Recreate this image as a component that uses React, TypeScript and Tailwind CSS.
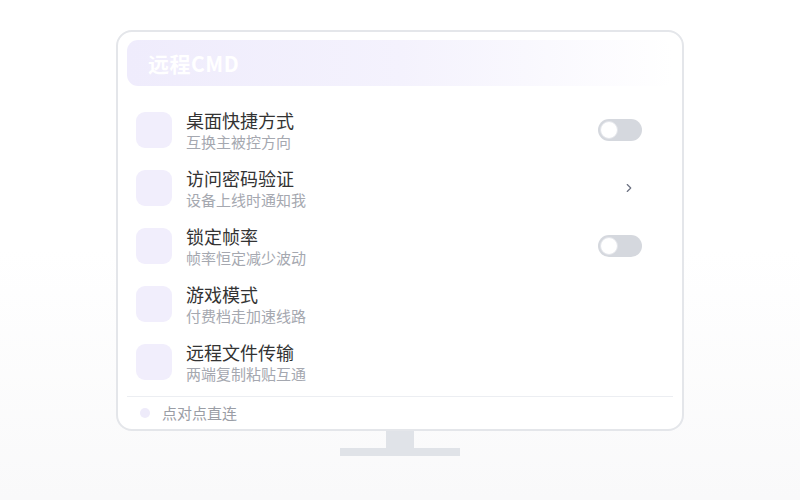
import { ChevronRight } from "lucide-react";

type Row = {
  title: string;
  desc: string;
  action: "toggle" | "chevron" | "none";
};

const rows: Row[] = [
  { title: "桌面快捷方式", desc: "互换主被控方向", action: "toggle" },
  { title: "访问密码验证", desc: "设备上线时通知我", action: "chevron" },
  { title: "锁定帧率", desc: "帧率恒定减少波动", action: "toggle" },
  { title: "游戏模式", desc: "付费档走加速线路", action: "none" },
  { title: "远程文件传输", desc: "两端复制粘贴互通", action: "none" },
];

function Toggle() {
  return (
    <div className="w-[44px] h-[22px] rounded-full bg-[#d5d8de] p-[2px] flex items-center">
      <div className="w-[18px] h-[18px] rounded-full bg-white border border-[#e3e5ea]" />
    </div>
  );
}

function SettingRow({ row }: { row: Row }) {
  return (
    <div className="h-[58px] shrink-0 flex items-center pl-[9px] pr-[31px]">
      <div className="w-[36px] h-[36px] rounded-[9px] bg-[#f1eefc] shrink-0" />
      <div className="ml-[14px] flex-1 flex flex-col">
        <span className="text-[18px] leading-[22px] text-[#333]">{row.title}</span>
        <span className="text-[15px] leading-[19px] mt-[1px] text-[#a5a8b0]">{row.desc}</span>
      </div>
      {row.action === "toggle" && <Toggle />}
      {row.action === "chevron" && (
        <ChevronRight className="w-[14px] h-[14px] text-[#6b7080] mr-[6px]" strokeWidth={2} />
      )}
    </div>
  );
}

export default function App() {
  return (
    <div
      className="w-[800px] h-[500px] bg-gradient-to-b from-white via-white to-[#f9f9fa] flex flex-col items-center pt-[30px]"
      style={{ fontFamily: '"Noto Sans CJK SC", "Noto Sans", sans-serif' }}
    >
      <div className="w-[568px] h-[401px] shrink-0 rounded-[16px] border-2 border-[#e4e6ea] bg-white px-[9px] pt-[8px] flex flex-col">
        <div className="h-[46px] shrink-0 rounded-[11px] bg-gradient-to-r from-[#efecfc] via-[#f4f2fd] to-transparent flex items-center px-[21px] pt-[2px]">
          <span className="text-[21px] font-bold text-white tracking-[0.5px]">远程CMD</span>
        </div>
        <div className="mt-[15px] shrink-0 flex flex-col">
          {rows.map((r) => (
            <SettingRow key={r.title} row={r} />
          ))}
        </div>
        <div className="mt-[5px] flex-1 border-t border-[#eceef2] flex items-center pl-[13px]">
          <div className="w-[10px] h-[10px] rounded-full bg-[#eeebfa]" />
          <span className="ml-[12px] text-[15px] text-[#9a9da5]">点对点直连</span>
        </div>
      </div>
      <div className="w-[28px] h-[17px] bg-[#e0e3e8]" />
      <div className="w-[120px] h-[8px] bg-[#e0e3e8]" />
    </div>
  );
}
